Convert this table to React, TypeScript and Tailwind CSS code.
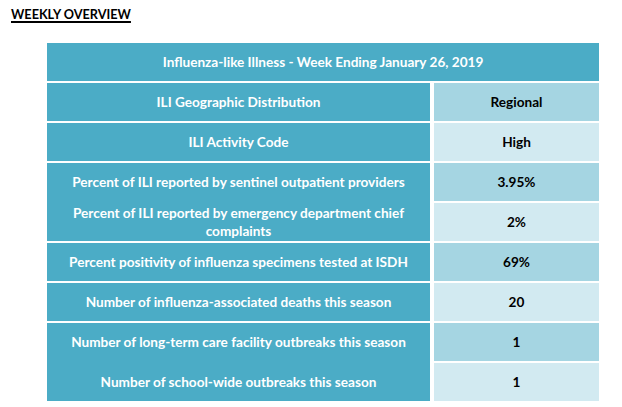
const rows: { label: React.ReactNode; value: string; joined?: boolean }[] = [
    { label: "ILI Geographic Distribution", value: "Regional" },
    { label: "ILI Activity Code", value: "High" },
    { label: "Percent of ILI reported by sentinel outpatient providers", value: "3.95%" },
    {
        label: (
            <>
                Percent of ILI reported by emergency department chief
                <br />
                complaints
            </>
        ),
        value: "2%",
        joined: true,
    },
    { label: "Percent positivity of influenza specimens tested at ISDH", value: "69%" },
    { label: "Number of influenza-associated deaths this season", value: "20" },
    { label: "Number of long-term care facility outbreaks this season", value: "1" },
    { label: "Number of school-wide outbreaks this season", value: "1", joined: true },
];

export default function App() {
    return (
        <div className="h-[407px] w-[622px] bg-white font-['Lato',sans-serif] font-bold">
            <div className="pl-[11px] pt-[6px] text-[12.7px] leading-[16px] text-black">
                <span className="underline decoration-[1.5px] underline-offset-[2px]">WEEKLY OVERVIEW</span>
            </div>

            <div className="ml-[47px] mt-[21px] w-[552px]">
                <div className="flex h-[38px] items-center justify-center bg-[#4bacc6] text-[13.6px] text-white">
                    Influenza-like Illness - Week Ending January 26, 2019
                </div>

                <div className="mt-[2px]">
                    {rows.map((row, i) => (
                        <div key={i} className="mt-[2px] flex h-[38px] gap-[4px] text-[13.6px]">
                            <div
                                className={
                                    row.joined
                                        ? "-mt-[2px] flex h-[40px] w-[383px] items-center justify-center bg-[#4bacc6] text-center leading-[18px] text-white"
                                        : "flex h-[38px] w-[383px] items-center justify-center bg-[#4bacc6] text-center leading-[18px] text-white"
                                }
                            >
                                <span className={row.joined ? "pt-[2px]" : ""}>{row.label}</span>
                            </div>
                            <div
                                className={
                                    i % 2 === 0
                                        ? "flex h-[38px] w-[165px] items-center justify-center bg-[#a5d5e2] text-black"
                                        : "flex h-[38px] w-[165px] items-center justify-center bg-[#d2eaf1] text-black"
                                }
                            >
                                {row.value}
                            </div>
                        </div>
                    ))}
                </div>
            </div>
        </div>
    );
}
